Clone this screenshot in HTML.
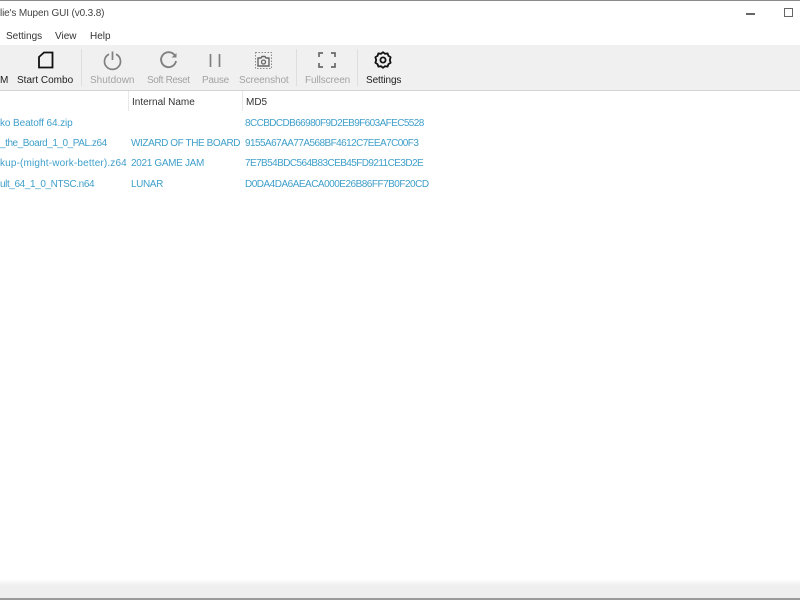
<!DOCTYPE html>
<html><head><meta charset="utf-8"><style>
html,body{margin:0;padding:0;background:#fff}
body{width:800px;height:600px;position:relative;overflow:hidden;font-family:"Liberation Sans",sans-serif;font-size:10px;color:#333;filter:blur(.3px)}
.t{position:absolute;white-space:nowrap;line-height:14px}
.b{position:absolute;background:#f0f0f0}
.g{color:#a3a3a3}.k{color:#1d1d1d}.c{color:#3f9fca}
.s{position:absolute;top:49px;width:1px;height:37px;background:#dedede}
svg{position:absolute;overflow:visible;fill:none}
</style></head><body>
<div class="b" style="left:0;top:0;width:800px;height:1px;background:#8a8a8a"></div>
<div class="t" style="left:0;top:7px;font-size:10px;color:#444;letter-spacing:-.13px">lie's Mupen GUI (v0.3.8)</div>
<div class="t" style="left:6px;top:30px;font-size:10px">Settings</div>
<div class="t" style="left:55px;top:30px;font-size:10px">View</div>
<div class="t" style="left:90px;top:30px;font-size:10px">Help</div>
<div class="b" style="left:746px;top:13px;width:9px;height:1.5px;background:#666"></div>
<div class="b" style="left:784px;top:8px;width:7px;height:7px;background:none;border:1.5px solid #666"></div>

<div class="b" style="left:0;top:45px;width:800px;height:45px"></div>
<div class="b" style="left:0;top:90px;width:800px;height:1px;background:#d4d4d4"></div>
<div class="s" style="left:81px"></div><div class="s" style="left:296px"></div><div class="s" style="left:357px"></div>

<svg style="left:37px;top:51px" width="17" height="18" viewBox="0 0 17 18"><path d="M2 6 L7 1.5 H15.5 V16.5 H2 Z" stroke="#111" stroke-width="1.8"/></svg>
<svg style="left:103px;top:51px" width="19" height="19" viewBox="0 0 19 19"><path d="M6 3.2 A8 8 0 1 0 13 3.2 M9.5 0.5 V9" stroke="#808080" stroke-width="1.7"/></svg>
<svg style="left:159px;top:51px" width="19" height="19" viewBox="0 0 19 19"><path d="M15.5 4 A7.5 7.5 0 1 0 17 10" stroke="#808080" stroke-width="1.9"/><path d="M12.5 6.5 L17.5 6.5 L17.5 2 Z" fill="#808080"/></svg>
<svg style="left:209px;top:54px" width="12" height="13" viewBox="0 0 12 13"><path d="M1.5 0 V13 M10.5 0 V13" stroke="#808080" stroke-width="1.7"/></svg>
<svg style="left:255px;top:52px" width="17" height="17" viewBox="0 0 17 17"><path d="M.5.5H16.5V16.5H.5Z" stroke="#8a8a8a" stroke-dasharray="1.5 1.5"/><path d="M3 6H6L7 4.5H10L11 6H14V14H3Z" stroke="#666" stroke-width="1.4"/><circle cx="8.5" cy="10" r="2" stroke="#666" stroke-width="1.3"/></svg>
<svg style="left:318px;top:52px" width="18" height="16" viewBox="0 0 18 16"><path d="M1 5V1H5M13 1H17V5M1 11V15H5M13 15H17V11" stroke="#6a6a6a" stroke-width="1.7"/></svg>
<svg style="left:374px;top:51px" width="18" height="18" viewBox="0 0 18 18"><path d="M9 1.2 L11 2.8 L13.6 2.4 L14.4 4.8 L16.6 6.2 L15.8 9 L16.6 11.8 L14.4 13.2 L13.6 15.6 L11 15.2 L9 16.8 L7 15.2 L4.4 15.6 L3.6 13.2 L1.4 11.8 L2.2 9 L1.4 6.2 L3.6 4.8 L4.4 2.4 L7 2.8 Z" stroke="#111" stroke-width="1.8" stroke-linejoin="round"/><circle cx="9" cy="9" r="2.6" stroke="#111" stroke-width="1.8"/></svg>

<div class="t k" style="left:0;top:74px">M</div>
<div class="t k" style="left:17px;top:74px">Start Combo</div>
<div class="t g" style="left:90px;top:74px">Shutdown</div>
<div class="t g" style="left:147px;top:74px;letter-spacing:-.4px">Soft Reset</div>
<div class="t g" style="left:202px;top:74px;letter-spacing:-.3px">Pause</div>
<div class="t g" style="left:239px;top:74px;letter-spacing:-.1px">Screenshot</div>
<div class="t g" style="left:305px;top:74px;letter-spacing:-.1px">Fullscreen</div>
<div class="t k" style="left:366px;top:74px;letter-spacing:-.1px">Settings</div>

<div class="b" style="left:128px;top:91px;width:1px;height:20px;background:#e8e8e8"></div>
<div class="b" style="left:242px;top:91px;width:1px;height:20px;background:#e8e8e8"></div>
<div class="t" style="left:132px;top:96px">Internal Name</div>
<div class="t" style="left:246px;top:96px">MD5</div>

<div class="t c" style="left:0;top:117px;letter-spacing:-.1px">ko Beatoff 64.zip</div>
<div class="t c" style="left:0;top:137px;letter-spacing:-.45px">_the_Board_1_0_PAL.z64</div>
<div class="t c" style="left:0;top:157px;letter-spacing:.15px">kup-(might-work-better).z64</div>
<div class="t c" style="left:0;top:178px;letter-spacing:-.4px">ult_64_1_0_NTSC.n64</div>
<div class="t c" style="left:131px;top:137px;letter-spacing:-.42px">WIZARD OF THE BOARD</div>
<div class="t c" style="left:131px;top:157px;letter-spacing:-.33px">2021 GAME JAM</div>
<div class="t c" style="left:131px;top:178px;letter-spacing:-.4px">LUNAR</div>
<div class="t c" style="left:245px;top:117px;letter-spacing:-.6px">8CCBDCDB66980F9D2EB9F603AFEC5528</div>
<div class="t c" style="left:245px;top:137px;letter-spacing:-.56px">9155A67AA77A568BF4612C7EEA7C00F3</div>
<div class="t c" style="left:245px;top:157px;letter-spacing:-.58px">7E7B54BDC564B83CEB45FD9211CE3D2E</div>
<div class="t c" style="left:245px;top:178px;letter-spacing:-.5px">D0DA4DA6AEACA000E26B86FF7B0F20CD</div>

<div class="b" style="left:0;top:580px;width:800px;height:18px;background:linear-gradient(#fdfdfd,#efefef 30%)"></div>
<div class="b" style="left:0;top:598px;width:800px;height:2px;background:#9a9a9a"></div>
</body></html>
